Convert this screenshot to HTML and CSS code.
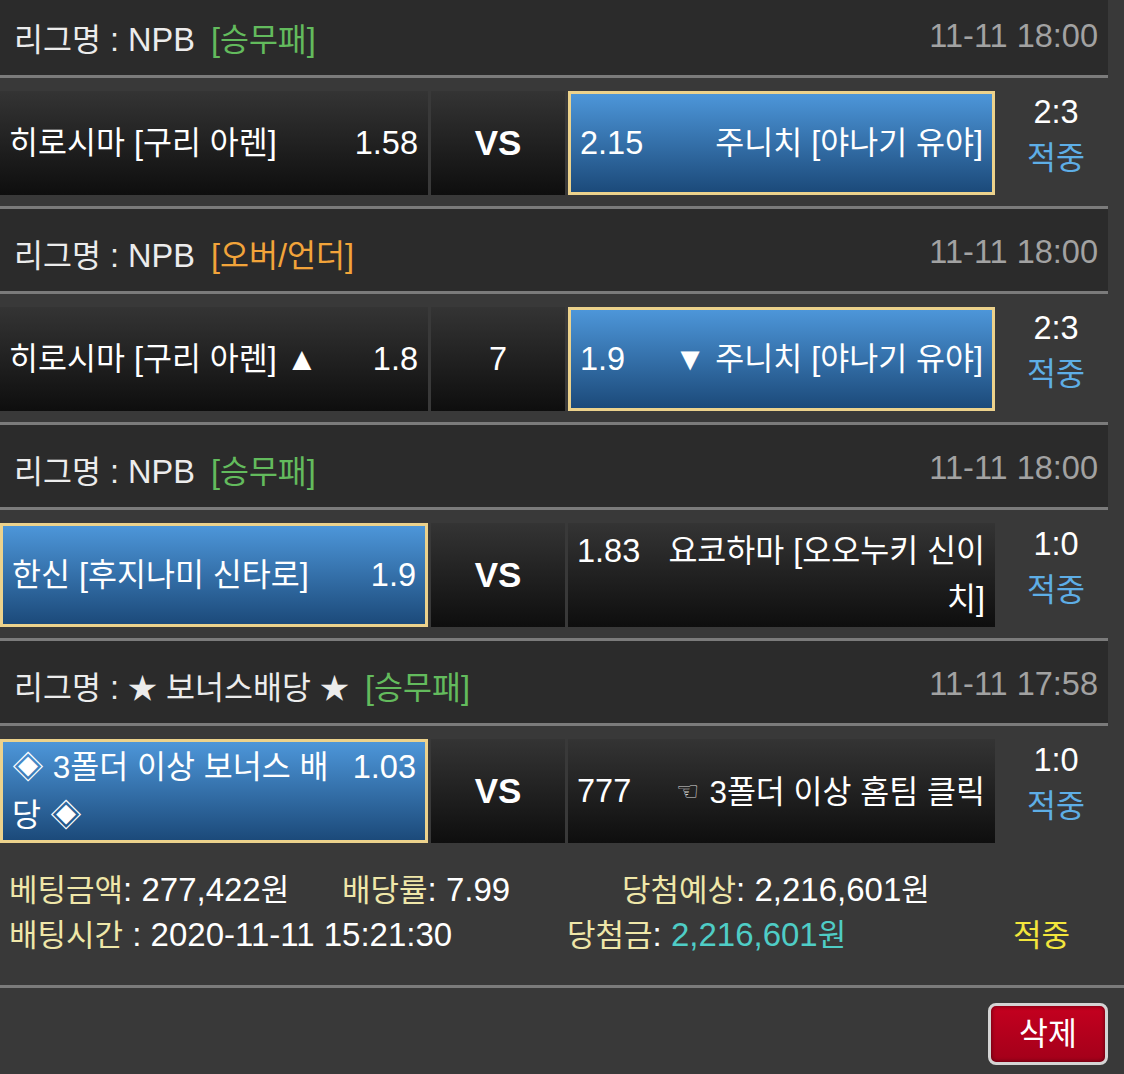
FILE: index.html
```html
<!DOCTYPE html>
<html lang="ko">
<head>
<meta charset="utf-8">
<title>베팅내역</title>
<link rel="stylesheet" href="styles.css">
</head>
<body>
<div class="list">
  <section class="block">
    <div class="league">
      <div class="league-name"><span class="k">리그명</span> : NPB<span class="type win">[<span class="k">승무패</span>]</span></div>
      <div class="league-time">11-11 18:00</div>
    </div>
    <div class="match">
      <div class="cell home"><div class="inner"><span class="team"><span class="k">히로시마</span> [<span class="k">구리 아렌</span>]</span><span class="odds">1.58</span></div></div>
      <div class="cell mid vs">VS</div>
      <div class="cell away picked"><div class="inner"><span class="odds">2.15</span><span class="team"><span class="k">주니치</span> [<span class="k">야나기 유야</span>]</span></div></div>
      <div class="score"><div>2:3</div><div class="hit k">적중</div></div>
    </div>
  </section>

  <section class="block">
    <div class="league">
      <div class="league-name"><span class="k">리그명</span> : NPB<span class="type ou">[<span class="k">오버</span>/<span class="k">언더</span>]</span></div>
      <div class="league-time">11-11 18:00</div>
    </div>
    <div class="match">
      <div class="cell home"><div class="inner"><span class="team"><span class="k">히로시마</span> [<span class="k">구리 아렌</span>] ▲</span><span class="odds">1.8</span></div></div>
      <div class="cell mid">7</div>
      <div class="cell away picked"><div class="inner"><span class="odds">1.9</span><span class="team">▼ <span class="k">주니치</span> [<span class="k">야나기 유야</span>]</span></div></div>
      <div class="score"><div>2:3</div><div class="hit k">적중</div></div>
    </div>
  </section>

  <section class="block">
    <div class="league">
      <div class="league-name"><span class="k">리그명</span> : NPB<span class="type win">[<span class="k">승무패</span>]</span></div>
      <div class="league-time">11-11 18:00</div>
    </div>
    <div class="match">
      <div class="cell home picked"><div class="inner"><span class="team"><span class="k">한신</span> [<span class="k">후지나미 신타로</span>]</span><span class="odds">1.9</span></div></div>
      <div class="cell mid vs">VS</div>
      <div class="cell away"><div class="inner"><span class="odds">1.83</span><span class="team"><span class="k">요코하마</span> [<span class="k">오오누키 신이치</span>]</span></div></div>
      <div class="score"><div>1:0</div><div class="hit k">적중</div></div>
    </div>
  </section>

  <section class="block">
    <div class="league">
      <div class="league-name"><span class="k">리그명</span> : <span class="k star">★</span> <span class="k">보너스배당</span> <span class="k star">★</span><span class="type win">[<span class="k">승무패</span>]</span></div>
      <div class="league-time">11-11 17:58</div>
    </div>
    <div class="match">
      <div class="cell home picked"><div class="inner"><span class="team"><span class="k">◈ 3폴더 이상 보너스 배당 ◈</span></span><span class="odds">1.03</span></div></div>
      <div class="cell mid vs">VS</div>
      <div class="cell away"><div class="inner"><span class="odds">777</span><span class="team"><span class="hand">☜</span><span class="k">3폴더 이상 홈팀 클릭</span></span></div></div>
      <div class="score"><div>1:0</div><div class="hit k">적중</div></div>
    </div>
  </section>
</div>

<div class="summary">
  <div class="sline">
    <span class="sitem bet"><span class="lbl k">베팅금액</span>: 277,422<span class="k">원</span></span>
    <span class="sitem rate"><span class="lbl k">배당률</span>: 7.99</span>
    <span class="sitem"><span class="lbl k">당첨예상</span>: 2,216,601<span class="k">원</span></span>
  </div>
  <div class="sline">
    <span class="sitem time"><span class="lbl k">배팅시간</span> : 2020-11-11 15:21:30</span>
    <span class="sitem prize"><span class="lbl k">당첨금</span>: <span class="won">2,216,601<span class="k">원</span></span></span>
    <span class="sitem result k">적중</span>
  </div>
</div>

<div class="actions">
  <button class="delete" type="button"><span class="k">삭제</span></button>
</div>
</body>
</html>
```

FILE: styles.css
```css
* {
  box-sizing: border-box;
}

html,
body {
  margin: 0;
  padding: 0;
}

body {
  width: 1124px;
  height: 1074px;
  overflow: hidden;
  background: #393939;
  color: #ffffff;
  font-family: "Liberation Sans", "Noto Sans CJK KR", sans-serif;
  font-size: 32.5px;
}

.k {
  font-size: 31.5px;
}

.k.star {
  font-size: 29px;
}

.list {
  width: 1108px;
  margin-top: -7px;
}

.league {
  height: 85px;
  display: flex;
  align-items: center;
  justify-content: space-between;
  padding: 5px 10px 0 14px;
  background: #2b2b2b;
  border-bottom: 3px solid #7b7b7b;
  color: #ececec;
  white-space: nowrap;
}

.league-time {
  color: #a2a2a2;
}

.type {
  margin-left: 16px;
}

.type.win {
  color: #63bb5d;
}

.type.ou {
  color: #f2a43a;
}

.match {
  display: flex;
  gap: 3px;
  height: 131px;
  padding: 13px 0 11px;
  border-bottom: 3px solid #7b7b7b;
}

.block:last-child .match {
  height: 128px;
  border-bottom: none;
}

.cell {
  height: 104px;
  display: flex;
  align-items: center;
  background: linear-gradient(#343434, #0e0e0e);
  line-height: 48px;
}

.inner {
  width: 100%;
  display: flex;
  align-items: flex-start;
}

.home {
  width: 428px;
  padding: 0 10px 0 9px;
}

.mid {
  width: 134px;
  justify-content: center;
}

.away {
  width: 427px;
  padding: 0 10px 0 9px;
}

.cell.picked {
  border: 3px solid #ecd28c;
  padding: 0 9px;
  background: linear-gradient(#4d96d9, #1c4a7a);
}

.vs {
  font-weight: bold;
  font-size: 35px;
}

.team {
  flex: 1;
  min-width: 0;
}

.odds {
  flex-shrink: 0;
}

.home .odds {
  margin-left: 12px;
}

.away .odds {
  margin-right: 16px;
}

.away .team {
  text-align: right;
}

.hand {
  font-family: "DejaVu Sans", sans-serif;
  font-size: 26px;
  color: #d8d8d8;
  margin-right: 10px;
  vertical-align: 3px;
}

.score {
  width: 110px;
  height: 104px;
  display: flex;
  flex-direction: column;
  align-items: center;
  justify-content: center;
  padding: 0 0 16px 6px;
  line-height: 46px;
}

.hit {
  color: #5eaee6;
}

.summary {
  font-size: 33px;
  padding: 11px 0 30px 9px;
  border-bottom: 3px solid #7b7b7b;
}

.summary .k {
  font-size: 31px;
}

.sline {
  height: 45px;
  display: flex;
  align-items: center;
  white-space: nowrap;
}

.lbl {
  color: #efe7a9;
}

.bet {
  width: 333px;
}

.rate {
  width: 280px;
}

.time {
  width: 558px;
}

.prize {
  width: 446px;
}

.won {
  color: #4fcdc6;
}

.result {
  color: #f3e63c;
}

.actions {
  display: flex;
  justify-content: flex-end;
  padding: 15px 16px 0 0;
}

.delete {
  width: 120px;
  height: 62px;
  margin: 0;
  padding: 0;
  border: 3px solid #d4d4d4;
  border-radius: 8px;
  background: linear-gradient(#c4001f, #a3001a);
  box-shadow: inset 0 0 4px rgba(0, 0, 0, 0.55);
  color: #ffffff;
  font-family: "Liberation Sans", "Noto Sans CJK KR", sans-serif;
  font-size: 32px;
  line-height: 1;
}
```
